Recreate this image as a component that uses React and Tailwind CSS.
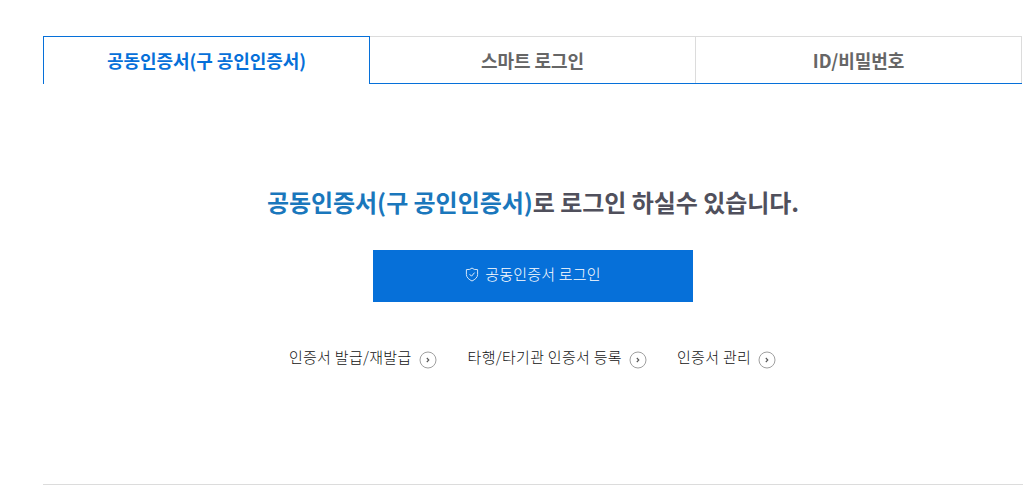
import React from 'react';

const FONT = "font-['Noto_Sans_CJK_KR','Noto_Sans',sans-serif]";

const tabs = ['스마트 로그인', 'ID/비밀번호'];

const links = [
  { label: '인증서 발급/재발급', gap: 'mr-[30px]' },
  { label: '타행/타기관 인증서 등록', gap: 'mr-[29px]' },
  { label: '인증서 관리', gap: '' },
];

const ArrowCircle = () => (
  <svg width="18" height="18" viewBox="0 0 18 18" fill="none" className="ml-2 mt-[6px] -translate-x-px shrink-0">
    <circle cx="9" cy="9" r="8" stroke="#a0a0a0" strokeWidth="1" />
    <path d="M7.8 7 9.8 9l-2 2" stroke="#555" strokeWidth="1.1" />
  </svg>
);

const ShieldIcon = () => (
  <svg width="14" height="15" viewBox="0 0 14 15" fill="none" className="mr-[6px] mb-[1px]">
    <path d="M7 1 9.2 2.4 12.6 2.6V7.6C12.6 10.4 10 12.6 7 14 4 12.6 1.4 10.4 1.4 7.6V2.6L4.8 2.4Z" stroke="#d5e6f8" strokeWidth="1" />
    <path d="M4.6 7.2 6.5 9.2 9.6 5.6" stroke="#e6f0fb" strokeWidth="1" />
  </svg>
);

export default function App() {
  return (
    <div className={`${FONT} w-[1034px] h-[502px] bg-white overflow-hidden pt-9 pl-[43px]`}>
      {/* 탭 */}
      <div className="flex w-[979px] h-12">
        <div className="w-[327px] h-12 border border-b-0 border-[#0670d9] flex items-center justify-center text-[18px] font-bold text-[#0670d9] tracking-[-0.05px]">
          공동인증서(구 공인인증서)
        </div>
        {tabs.map((tab) => (
          <div
            key={tab}
            className="flex-1 h-12 border-t border-r border-[#dcdcdc] flex items-center justify-center text-[18px] font-bold text-[#666666] tracking-[-0.05px] relative"
          >
            {tab}
            <span className="absolute left-0 right-[-1px] bottom-0 h-px bg-[#0670d9]" />
          </div>
        ))}
      </div>

      {/* 본문 */}
      <div className="w-[980px] flex flex-col items-center">
        <h2 className="mt-[98px] text-[24px] leading-[40px] font-bold text-[#50505c] tracking-[-0.05px]">
          <span className="text-[#1a77bc]">공동인증서(구 공인인증서)</span>로 로그인 하실수 있습니다.
        </h2>
        <button className="mt-[28px] w-80 h-[52px] bg-[#0670d9] text-white text-[15px] font-light tracking-[0.2px] flex items-center justify-center pb-[3px]">
          <ShieldIcon />
          공동인증서 로그인
        </button>
        <div className="mt-[43px] flex items-start">
          {links.map((link) => (
            <div key={link.label} className={`flex items-start text-[15px] font-light tracking-[0.3px] leading-[24px] text-[#111111] ${link.gap}`}>
              {link.label}
              <ArrowCircle />
            </div>
          ))}
        </div>
      </div>

      <div className="w-[980px] h-px bg-[#dcdcdc] mt-[115px]" />
    </div>
  );
}
